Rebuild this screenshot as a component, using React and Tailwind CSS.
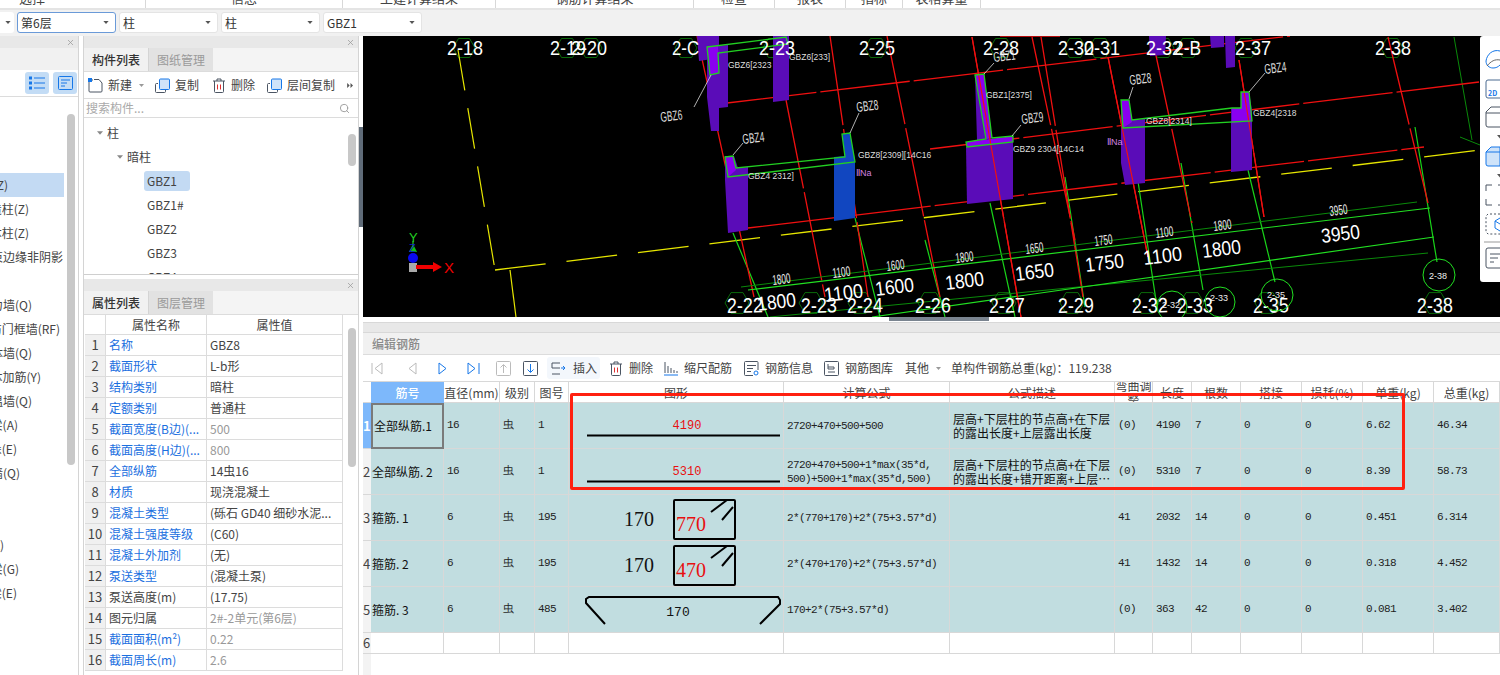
import { X, Search } from 'lucide-react';

const cjk = "font-['Noto_Sans_CJK_SC',sans-serif]";
const mono = "font-['Liberation_Mono',monospace] text-[11px] tracking-[-0.6px]";

function Caret({ className = 'w-[7px] h-[4px]', color = '#666' }) {
    return (
        <svg viewBox="0 0 7 4" className={className}>
            <path d="M0 0h7L3.5 4z" fill={color} />
        </svg>
    );
}

function Dropdown({ label, className }) {
    return (
        <div className={`flex h-[21px] items-center justify-between rounded-[3px] border bg-white pl-[3px] pr-[6px] text-[12px] text-[#333] ${className}`}>
            <span>{label}</span>
            <Caret className="w-[6px] h-[3px]" color="#555" />
        </div>
    );
}

function TitleBar() {
    return (
        <div className="flex h-[12px] items-center justify-end bg-[#e8e8e8] pr-[3px]">
            <X className="w-[9px] h-[9px] text-[#999]" strokeWidth={2} />
        </div>
    );
}

function Tabs({ first, second }) {
    return (
        <div className="flex h-[24px] border-b border-[#dcdcdc] bg-[#f4f4f4] text-[12px]">
            <div className="flex w-[65px] items-center justify-center border-r border-[#d4d4d4] bg-[#f1f1f1] font-medium text-[#333]">{first}</div>
            <div className="flex w-[64px] items-center justify-center bg-[#e2e2e2] text-[#9a9a9a]">{second}</div>
        </div>
    );
}

const leftRows = [
    { y: 'mt-[76px]', w: 'w-[8px]', t: '柱(Z)', active: true },
    { w: 'w-[29px]', t: '构造柱(Z)' },
    { w: 'w-[29px]', t: '砌体柱(Z)' },
    { w: 'w-[63px]', t: '约束边缘非阴影' },
    { y: 'mt-[24px]', w: 'w-[32px]', t: '剪力墙(Q)' },
    { w: 'w-[60px]', t: '人防门框墙(RF)' },
    { w: 'w-[32px]', t: '砌体墙(Q)' },
    { w: 'w-[41px]', t: '砌体加筋(Y)' },
    { w: 'w-[32px]', t: '保温墙(Q)' },
    { w: 'w-[18px]', t: '暗梁(A)' },
    { w: 'w-[17px]', t: '墙垛(E)' },
    { w: 'w-[20px]', t: '幕墙(Q)' },
    { y: 'mt-[48px]', w: 'w-[4px]', t: '梁(L)' },
    { w: 'w-[19px]', t: '圈梁(G)' },
    { w: 'w-[17px]', t: '连梁(E)' },
];

function LeftPanel() {
    return (
        <div className="relative w-[79px] shrink-0 overflow-hidden border-r border-[#d4d4d4]">
            <TitleBar />
            <div className="h-[22px] bg-[#f1f1f1]" />
            <div className="flex h-[27px] items-center justify-end gap-[4px] border-b border-[#dcdcdc] pr-[1px]">
                <div className="flex h-[22px] w-[24px] items-center justify-center rounded-[3px] bg-[#c3dcf5]">
                    <svg viewBox="0 0 16 14" className="w-[16px] h-[14px]" fill="none" stroke="#1677e8">
                        <path d="M5 2h11M5 7h11M5 12h11" />
                        <rect x="0.5" y="1" width="2" height="2" /><rect x="0.5" y="6" width="2" height="2" /><rect x="0.5" y="11" width="2" height="2" />
                    </svg>
                </div>
                <div className="flex h-[22px] w-[24px] items-center justify-center rounded-[3px] bg-[#c3dcf5]">
                    <svg viewBox="0 0 15 14" className="w-[15px] h-[14px]" fill="none" stroke="#1677e8">
                        <rect x="0.5" y="0.5" width="14" height="13" rx="1" />
                        <path d="M3 4h9M3 7h6M3 10h4" />
                    </svg>
                </div>
            </div>
            <div className="text-[12px] text-[#444]">
                {leftRows.map((r) => (
                    <div key={r.t} className={`flex h-[24px] w-[64px] items-center overflow-hidden ${r.y || ''} ${r.active ? 'bg-[#c3daf3]' : ''}`}>
                        <div className={`flex shrink-0 justify-end whitespace-nowrap ${r.w}`}>{r.t}</div>
                    </div>
                ))}
            </div>
            <div className="absolute left-[67px] top-[78px] h-[351px] w-[8px] rounded-full bg-[#c8c8c8]" />
        </div>
    );
}

function ToolIcon({ children, className = 'w-[15px] h-[15px]', vb = '0 0 15 15' }) {
    return (
        <svg viewBox={vb} className={`shrink-0 ${className}`} fill="none" stroke="#4b5563">
            {children}
        </svg>
    );
}

const copyPath = (
    <>
        <path d="M3 5.5H1.5a1 1 0 0 0-1 1v7a1 1 0 0 0 1 1h8a1 1 0 0 0 1-1V12" />
        <rect x="4.5" y="1" width="10" height="10.5" rx="1" fill="#cfe3f9" stroke="#1677e8" />
    </>
);

const trashPath = (
    <>
        <path d="M1 3h12M5 3V1h4v2M2.5 3v10.5a1 1 0 0 0 1 1h7a1 1 0 0 0 1-1V3" />
        <path d="M5.5 6.5v5M8.5 6.5v5" stroke="#e03030" />
    </>
);

function ComponentToolbar() {
    return (
        <div className="flex h-[27px] items-center border-b border-[#dcdcdc] pl-[4px] text-[12px] text-[#444]">
            <ToolIcon>
                <path d="M5 2H2a1.5 1.5 0 0 0-1 1v10a1 1 0 0 0 1 1h11a1 1 0 0 0 1-1V5l-3-3.500H6" />
                <path d="M0 0h4v4H0z" fill="#1677e8" stroke="none" />
            </ToolIcon>
            <span className="ml-[5px]">新建</span>
            <Caret className="ml-[7px] w-[5px] h-[3px]" color="#999" />
            <ToolIcon className="ml-[11px] w-[15px] h-[15px]">{copyPath}</ToolIcon>
            <span className="ml-[5px]">复制</span>
            <ToolIcon className="ml-[13px] w-[14px] h-[15px]" vb="0 0 14 15">{trashPath}</ToolIcon>
            <span className="ml-[5px]">删除</span>
            <ToolIcon className="ml-[12px] w-[15px] h-[15px]">{copyPath}</ToolIcon>
            <span className="ml-[5px]">层间复制</span>
            <div className="ml-[11px] flex h-[16px] w-[9px] items-center justify-center rounded-[2px] bg-white">
                <svg viewBox="0 0 8 6" className="w-[7px] h-[5px]"><path d="M0 0l3 3-3 3zM4 0l3 3-3 3z" fill="#555" /></svg>
            </div>
        </div>
    );
}

function ComponentList() {
    return (
        <div className="relative h-[239px] border-b border-[#cfcfcf]">
            <TitleBar />
            <Tabs first="构件列表" second="图纸管理" />
            <ComponentToolbar />
            <div className="flex h-[19px] items-center justify-between border-b border-[#dcdcdc] pl-[2px] pr-[8px] text-[12px] text-[#aaa]">
                <span>搜索构件...</span>
                <Search className="w-[11px] h-[11px] text-[#999]" />
            </div>
            <div className="h-[156px] overflow-hidden pt-[3px] text-[12px] text-[#444]">
                <div className="flex h-[24px] items-center pl-[13px]">
                    <Caret className="w-[6px] h-[4px]" color="#888" /><span className="ml-[4px]">柱</span>
                </div>
                <div className="flex h-[24px] items-center pl-[33px]">
                    <Caret className="w-[6px] h-[4px]" color="#888" /><span className="ml-[4px]">暗柱</span>
                </div>
                {['GBZ1', 'GBZ1#', 'GBZ2', 'GBZ3', 'GBZ4'].map((g, i) => (
                    <div key={g} className="flex h-[24px] items-center pl-[60px]">
                        <span className={`rounded-[3px] px-[3px] py-[1px] ${i === 0 ? 'w-[46px] bg-[#c3daf3]' : ''}`}>{g}</span>
                    </div>
                ))}
            </div>
            <div className="absolute left-[264px] top-[98px] h-[32px] w-[8px] rounded-full bg-[#c8c8c8]" />
        </div>
    );
}

const props = [
    ['名称', 'GBZ8', 1],
    ['截面形状', 'L-b形', 1],
    ['结构类别', '暗柱', 1],
    ['定额类别', '普通柱', 1],
    ['截面宽度(B边)(...', '500', 1, 1],
    ['截面高度(H边)(...', '800', 1, 1],
    ['全部纵筋', '14虫16', 1],
    ['材质', '现浇混凝土', 1],
    ['混凝土类型', '(砾石 GD40 细砂水泥...', 1],
    ['混凝土强度等级', '(C60)', 1],
    ['混凝土外加剂', '(无)', 1],
    ['泵送类型', '(混凝土泵)', 1],
    ['泵送高度(m)', '(17.75)', 0],
    ['图元归属', '2#-2单元(第6层)', 0, 1],
    ['截面面积(m²)', '0.22', 1, 1],
    ['截面周长(m)', '2.6', 1, 1],
];

function PropertyList() {
    return (
        <div className="relative mt-[4px] flex-1 overflow-hidden">
            <TitleBar />
            <Tabs first="属性列表" second="图层管理" />
            <div className="ml-px grid w-[258px] grid-cols-[21px_101px_136px] text-[12px]">
                <div className="h-[20px] border-b border-r border-[#dcdcdc]" />
                <div className="flex h-[20px] items-center justify-center border-b border-r border-[#dcdcdc] text-[#444]">属性名称</div>
                <div className="flex h-[20px] items-center justify-center border-b border-r border-[#dcdcdc] text-[#444]">属性值</div>
                {props.map(([name, val, blue, gray], i) => (
                    <div key={name} className="contents">
                        <div className="flex h-[21px] items-center justify-center border-b border-r border-[#dcdcdc] bg-[#f0f0f0] text-[13px] text-[#444]">{i + 1}</div>
                        <div className={`flex h-[21px] items-center overflow-hidden whitespace-nowrap border-b border-r border-[#dcdcdc] pl-[3px] ${blue ? 'text-[#1a6fe0]' : 'text-[#444]'}`}>{name}</div>
                        <div className={`flex h-[21px] items-center overflow-hidden whitespace-nowrap border-b border-r border-[#dcdcdc] pl-[3px] ${gray ? 'text-[#999]' : 'text-[#444]'}`}>{val}</div>
                    </div>
                ))}
            </div>
            <div className="ml-[6px] mt-[4px] h-[6px] w-[79px] rounded-t-[4px] border border-[#ccc]" />
            <div className="absolute left-[264px] top-[49px] h-[139px] w-[8px] rounded-full bg-[#c8c8c8]" />
        </div>
    );
}

// 3D model view, coordinates are page coordinates
const pts = (a) => a.map((p) => p.join(',')).join(' ');

const purple = [
    [[697, 36], [719, 36], [719, 58], [699, 61]],
    [[707, 47], [728, 45], [728, 107], [719, 108], [719, 131], [711, 131], [707, 97]],
    [[773, 36], [789, 36], [789, 100], [773, 102]],
    [[725, 156], [734, 156], [738, 168], [748, 167], [748, 230], [728, 233], [725, 180]],
    [[975, 75], [984, 74], [992, 138], [985, 140], [977, 140]],
    [[966, 147], [1013, 142], [1013, 199], [967, 204]],
    [[1121, 100], [1129, 100], [1132, 120], [1145, 119], [1145, 183], [1125, 185], [1121, 163]],
    [[1231, 108], [1241, 108], [1241, 92], [1249, 92], [1252, 110], [1252, 170], [1231, 172]],
    [[1149, 36], [1166, 36], [1165, 55], [1150, 56]],
    [[1210, 36], [1224, 36], [1224, 47], [1211, 48]],
    [[1225, 36], [1235, 36], [1235, 67], [1226, 68]],
];

// brighter top faces of the L-shaped columns
const stems = [
    [[707, 47], [718, 46], [719, 73], [710, 75]],
    [[725, 157], [733, 156], [736, 170], [728, 177]],
    [[975, 75], [984, 74], [992, 138], [986, 139]],
    [[1121, 100], [1129, 100], [1132, 122], [1123, 128]],
    [[1241, 92], [1249, 92], [1252, 121], [1232, 123], [1232, 108], [1241, 108]],
];

const outlines = [
    [[707, 47], [786, 37], [788, 44], [718, 53], [719, 73], [710, 75]],
    [[725, 157], [733, 156], [736, 168], [845, 157], [842, 134], [850, 133], [855, 162], [728, 177]],
    [[975, 75], [984, 74], [992, 138], [1013, 136], [1013, 142], [967, 147], [966, 142], [986, 139]],
    [[1121, 100], [1129, 100], [1132, 120], [1232, 108], [1241, 108], [1241, 92], [1249, 92], [1252, 121], [1123, 128]],
];

const redLines = [
    [697, 36, 754, 297], [786, 100, 825, 297], [830, 36, 868, 297], [887, 36, 940, 297],
    [972, 37, 1021, 317], [1032, 37, 1075, 240], [1041, 37, 1083, 297], [1108, 57, 1148, 257],
    [1152, 37, 1192, 223], [1239, 60, 1264, 217], [1388, 37, 1428, 203],
    [727, 103, 1290, 36], [930, 149, 1479, 82], [748, 228, 1424, 147],
    [1000, 36, 1060, 36],
];

const greenLines = [
    [990, 203, 1015, 317], [1065, 177, 1085, 307], [1134, 155, 1157, 307], [1181, 163, 1203, 290],
    [1248, 170, 1275, 282], [1415, 127, 1437, 262], [733, 233, 768, 317], [855, 218, 880, 317], [925, 240, 945, 317],
];

const dimDark = [[741, 287, 1417, 202], [770, 317, 1428, 253]];
const dimBright = [[748, 290, 1430, 208], [872, 317, 1434, 237]];
const darkGreen = [[1454, 37, 1472, 140], [1460, 137, 1480, 145]];

const hexes = [464, 567, 591, 686, 774, 876, 1001, 1075, 1100, 1163, 1188, 1246, 1392];
const hexesLow = [737, 811, 860, 930, 1004, 1072, 1147, 1192, 1267, 1435];

const topLabels = [[447, '2-18'], [550, '2-19'], [571, '2-20'], [672, '2-C'], [759, '2-23'], [859, '2-25'], [983, '2-28'], [1058, '2-30'], [1084, '2-31'], [1146, '2-32'], [1174, '2-B'], [1235, '2-37'], [1375, '2-38']];
const lowLabels = [[727, '2-22'], [801, '2-23'], [847, '2-24'], [915, '2-26'], [989, '2-27'], [1058, '2-29'], [1132, '2-32'], [1177, '2-33'], [1253, '2-35'], [1417, '2-38']];

const bigDims = [[758, 311, '1800'], [825, 302, '1100'], [876, 296, '1600'], [946, 290, '1800'], [1016, 281, '1650'], [1086, 272, '1750'], [1144, 265, '1100'], [1203, 258, '1800'], [1322, 243, '3950']];
const smallDims = [[773, 285, '1800'], [833, 278, '1100'], [887, 271, '1600'], [956, 263, '1800'], [1026, 254, '1650'], [1095, 246, '1750'], [1156, 238, '1100'], [1214, 231, '1800'], [1330, 216, '3950']];

const tags = [[661, 122, 'GBZ6'], [743, 144, 'GBZ4'], [857, 112, 'GBZ8'], [994, 62, 'GBZ1'], [1022, 124, 'GBZ9'], [1130, 85, 'GBZ8'], [1265, 74, 'GBZ4']];
const notes = [[728, 68, 'GBZ6[2323'], [789, 60, 'GBZ6[233]'], [748, 179, 'GBZ4 2312]'], [858, 158, 'GBZ8[2309][14C16'], [986, 98, 'GBZ1[2375]'], [1013, 152, 'GBZ9 2304[14C14'], [1146, 124, 'GBZ8[2314]'], [1253, 116, 'GBZ4[2318']];
const leaders = [[694, 107, 711, 75], [733, 155, 743, 143], [850, 133, 859, 113], [984, 74, 994, 63], [1012, 136, 1021, 125], [1129, 99, 1133, 87], [1249, 92, 1265, 73]];

function hexPoints(cx, cy, r) {
    return Array.from({ length: 6 }, (_, i) => {
        const a = (Math.PI / 3) * i;
        return `${cx + r * Math.cos(a)},${cy + r * Math.sin(a)}`;
    }).join(' ');
}

function ModelView() {
    return (
        <svg viewBox="363 36 1137 281" className="block h-[281px] w-[1137px] bg-black font-['Liberation_Sans',sans-serif]">
            {hexes.map((x) => <polygon key={x} points={hexPoints(x, 48, 11)} fill="none" stroke="#0a6a0a" />)}
            {hexesLow.map((x) => <polygon key={x} points={hexPoints(x, 303, 12)} fill="none" stroke="#0a6a0a" />)}
            <path d="M458 50L495 270" stroke="#e6e600" strokeWidth="1.2" strokeDasharray="41 18" />
            <path d="M495 270L1480 150" stroke="#e6e600" strokeWidth="1.3" strokeDasharray="51 21" />
            <path d="M510 270L516 317" stroke="#e6e600" strokeWidth="1.2" />
            {greenLines.map((l) => <line key={l.join()} x1={l[0]} y1={l[1]} x2={l[2]} y2={l[3]} stroke="#19d419" strokeWidth="1.2" />)}
            {darkGreen.map((l) => <line key={l.join()} x1={l[0]} y1={l[1]} x2={l[2]} y2={l[3]} stroke="#0a8a0a" />)}
            {redLines.map((l) => <line key={l.join()} x1={l[0]} y1={l[1]} x2={l[2]} y2={l[3]} stroke="#f01010" strokeWidth="1.3" strokeDasharray="90 4" />)}
            {dimDark.map((l) => <line key={l.join()} x1={l[0]} y1={l[1]} x2={l[2]} y2={l[3]} stroke="#0a8a0a" />)}
            {dimBright.map((l) => <line key={l.join()} x1={l[0]} y1={l[1]} x2={l[2]} y2={l[3]} stroke="#22e022" strokeWidth="1.2" />)}
            {purple.map((p) => <polygon key={p.join()} points={pts(p)} fill="#5a0cb8" />)}
            <polygon points="966,142 1013,136 1013,142 967,147" fill="#8a00f0" />
            <polygon points={pts([[842, 134], [850, 133], [855, 160], [855, 218], [834, 221], [834, 157], [845, 156]])} fill="#1146c0" />
            {stems.map((p) => <polygon key={p.join()} points={pts(p)} fill="#8a00f0" />)}
            <line x1="972" y1="37" x2="1021" y2="317" stroke="#f01010" strokeWidth="1.2" />
            <line x1="1108" y1="57" x2="1148" y2="257" stroke="#f01010" strokeWidth="1.2" />
            <line x1="1239" y1="60" x2="1264" y2="217" stroke="#f01010" strokeWidth="1.2" />
            {outlines.map((p) => <polygon key={p.join()} points={pts(p)} fill="none" stroke="#22d022" strokeWidth="1.3" />)}
            {leaders.map((l) => <line key={l.join()} x1={l[0]} y1={l[1]} x2={l[2]} y2={l[3]} stroke="#ddd" strokeWidth="0.8" />)}
            {topLabels.map(([x, t]) => <text key={x} x={x} y="55" fontSize="21" textLength={t.length * 9} lengthAdjust="spacingAndGlyphs" fill="#fff">{t}</text>)}
            {lowLabels.map(([x, t]) => <text key={x} x={x} y="313" fontSize="21" textLength={t.length * 9} lengthAdjust="spacingAndGlyphs" fill="#fff" transform={`rotate(-1 ${x} 313)`}>{t}</text>)}
            {bigDims.map(([x, y, t]) => <text key={x} x={x} y={y} fontSize="20" textLength="39" lengthAdjust="spacingAndGlyphs" fill="#fff" transform={`rotate(-7 ${x} ${y})`}>{t}</text>)}
            {smallDims.map(([x, y, t]) => <text key={x} x={x} y={y} fontSize="14" textLength="18" lengthAdjust="spacingAndGlyphs" fill="#eee" transform={`rotate(-7 ${x} ${y})`}>{t}</text>)}
            {tags.map(([x, y, t]) => <text key={t + x} x={x} y={y} fontSize="14" textLength="22" lengthAdjust="spacingAndGlyphs" fill="#ddd" transform={`rotate(-7 ${x} ${y})`}>{t}</text>)}
            {notes.map(([x, y, t]) => <text key={t} x={x} y={y} fontSize="8.5" fill="#ddd">{t}</text>)}
            <text x="856" y="176" fontSize="9" fill="#d080e0">ⅡNa</text>
            <text x="1107" y="145" fontSize="9" fill="#d080e0">ⅡNa</text>
            <circle cx="1220" cy="302" r="15" fill="none" stroke="#22e022" />
            <circle cx="1277" cy="295" r="16" fill="none" stroke="#22e022" />
            <circle cx="1439" cy="275" r="16" fill="none" stroke="#22e022" />
            <circle cx="1172" cy="306" r="15" fill="none" stroke="#22e022" />
            <text x="1429" y="279" fontSize="9" fill="#eee">2-38</text>
            <text x="1267" y="298" fontSize="9" fill="#eee">2-35</text>
            <text x="1210" y="301" fontSize="9" fill="#eee">2-33</text>
            <text x="1162" y="308" fontSize="9" fill="#eee">2-32</text>
            {/* axis gizmo */}
            <path d="M413 241v4" stroke="#22d022" strokeWidth="1.2" />
            <path d="M413 244l4 8h-8z" fill="#10c010" />
            <text x="409" y="252" fontSize="11" fill="#1020c0">Z</text>
            <circle cx="413" cy="258" r="5" fill="#0a0af0" />
            <rect x="409" y="263" width="8" height="9" fill="#aaa" />
            <path d="M416 265h17v-3l9 5-9 5v-3h-17z" fill="#f00000" />
            <text x="409" y="242" fontSize="13" fill="#22d022">Y</text>
            <text x="444" y="273" fontSize="15" fill="#f00000">X</text>
        </svg>
    );
}

function Palette() {
    return (
        <div className="absolute right-0 top-0 h-[246px] w-[20px] rounded-l-[3px] bg-white">
            <svg viewBox="1480 36 20 246" className="h-[246px] w-[20px]" fill="none" stroke="#4b5563">
                <path d="M1500 51c-7-2-13 3-14 10 0 4 3 7 7 7 3 0 5-1 7-3" stroke="#1677e8" />
                <path d="M1487 66c4-5 8-7 13-6" stroke="#666" />
                <path d="M1500 80h-12a2 2 0 0 0-2 2v14a2 2 0 0 0 2 2h12" stroke="#4b6a90" />
                <text x="1488" y="96" fontSize="7" fill="#1677e8" stroke="none" fontWeight="700">2D</text>
                <path d="M1500 107h-9l-5 5v13a2 2 0 0 0 2 2h12M1486 113h14" />
                <path d="M1497 135h7l-3.500 4z" fill="#555" stroke="none" />
                <path d="M1500 147h-9l-5 5v12a2 2 0 0 0 2 2h12z" fill="#cfe3f9" stroke="#1677e8" />
                <path d="M1486 152h14" stroke="#1677e8" />
                <path d="M1497 174h7l-3.500 4z" fill="#555" stroke="none" />
                <path d="M1492 185h-6v6M1486 199v6h6M1498 185h2M1498 205h2" />
                <path d="M1500 214h-12l-2 2v16l2 2h12" strokeDasharray="2 2" />
                <path d="M1500 218l-5 3v7l5 3M1495 221l5 3" stroke="#1677e8" />
                <path d="M1484 242h16" stroke="#999" />
                <path d="M1500 248h-12a2 2 0 0 0-2 2v16a2 2 0 0 0 2 2h12M1490 254h10M1490 258h8M1490 262h4" />
            </svg>
        </div>
    );
}

const columns = 'grid-cols-[8px_73px_56px_35px_34px_215px_166px_165px_38px_39px_49px_61px_61px_71px_66px]';
const cell = 'border-b border-r border-[#d8d8d8]';

const headers = ['直径(mm)', '级别', '图号', '图形', '计算公式', '公式描述', '弯曲调整', '长度', '根数', '搭接', '损耗(%)', '单重(kg)', '总重(kg)'];

function StraightBar({ value }) {
    return (
        <svg viewBox="0 0 214 45" className="h-[45px] w-[214px]">
            <text x="118" y="26" textAnchor="middle" fontSize="12" fill="#e81010" className="font-['Liberation_Mono',monospace]">{value}</text>
            <path d="M18 32.500h193" stroke="#000" strokeWidth="2" />
        </svg>
    );
}

function Stirrup({ value }) {
    return (
        <svg viewBox="0 0 214 45" className="h-[45px] w-[214px]">
            <text x="70" y="31" textAnchor="middle" fontSize="20" fill="#111" className="font-['Liberation_Serif',serif]">170</text>
            <rect x="105" y="5" width="61" height="39" rx="1" fill="none" stroke="#000" strokeWidth="2" />
            <path d="M142 17L158 5M153 25L164 12" stroke="#000" strokeWidth="2" fill="none" />
            <text x="107" y="36" fontSize="20" fill="#e81010" className="font-['Liberation_Serif',serif]">{value}</text>
        </svg>
    );
}

function Hook() {
    return (
        <svg viewBox="0 0 214 45" className="h-[45px] w-[214px]">
            <path d="M36 37L17 16V12l3-2h189l2 3v4L191 37" stroke="#000" strokeWidth="2" fill="none" />
            <text x="109" y="29" textAnchor="middle" fontSize="13" fill="#111" className="font-['Liberation_Mono',monospace]">170</text>
        </svg>
    );
}

const rows = [
    { name: '全部纵筋.1', d: '16', no: '1', shape: <StraightBar value="4190" />, f: ['2720+470+500+500'], desc: ['层高+下层柱的节点高+在下层', '的露出长度+上层露出长度'], adj: '(0)', len: '4190', n: '7', unit: '6.62', total: '46.34' },
    { name: '全部纵筋. 2', d: '16', no: '1', shape: <StraightBar value="5310" />, f: ['2720+470+500+1*max(35*d,', '500)+500+1*max(35*d,500)'], desc: ['层高+下层柱的节点高+在下层', '的露出长度+错开距离+上层…'], adj: '(0)', len: '5310', n: '7', unit: '8.39', total: '58.73' },
    { name: '箍筋. 1', d: '6', no: '195', shape: <Stirrup value="770" />, f: ['2*(770+170)+2*(75+3.57*d)'], desc: [], adj: '41', len: '2032', n: '14', unit: '0.451', total: '6.314' },
    { name: '箍筋. 2', d: '6', no: '195', shape: <Stirrup value="470" />, f: ['2*(470+170)+2*(75+3.57*d)'], desc: [], adj: '41', len: '1432', n: '14', unit: '0.318', total: '4.452' },
    { name: '箍筋. 3', d: '6', no: '485', shape: <Hook />, f: ['170+2*(75+3.57*d)'], desc: [], adj: '(0)', len: '363', n: '42', unit: '0.081', total: '3.402' },
];

function RebarTable() {
    const numCell = `${cell} flex items-center overflow-hidden whitespace-nowrap bg-[#c1dde0] pl-[3px] text-[#222] ${mono}`;
    return (
        <div className="relative flex-1 overflow-hidden">
            <div className={`grid ${columns} text-[12px] text-[#444]`}>
                <div className="h-[21px] border-b border-[#d8d8d8]" />
                <div className="flex h-[21px] items-center justify-center bg-[#7db8fb] font-medium text-white">筋号</div>
                {headers.map((h) => (
                    <div key={h} className={`${cell} flex h-[21px] items-center justify-center overflow-hidden text-center leading-[13px]`}>{h}</div>
                ))}
                {rows.map((r, i) => (
                    <div key={r.name} className="contents">
                        <div className={`flex h-[46px] items-center justify-start border-b border-[#d8d8d8] text-[13px] ${i === 0 ? 'bg-[#7db8fb] font-bold text-white' : 'bg-[#f3f3f3] text-[#444]'}`}>{i + 1}</div>
                        <div className={`flex h-[46px] items-center overflow-hidden whitespace-nowrap bg-[#c1dde0] pl-[1px] text-[#111] ${i === 0 ? 'border-2 border-[#7a7a7a]' : cell}`}>{r.name}</div>
                        <div className={numCell}>{r.d}</div>
                        <div className={numCell}>虫</div>
                        <div className={numCell}>{r.no}</div>
                        <div className={`${cell} overflow-hidden bg-[#c1dde0]`}>{r.shape}</div>
                        <div className={`${numCell} flex-col !items-start justify-center leading-[14px]`}>
                            {r.f.map((t) => <span key={t}>{t}</span>)}
                        </div>
                        <div className={`${cell} flex flex-col justify-center overflow-hidden whitespace-nowrap bg-[#c1dde0] pl-[3px] leading-[14px] text-[#111]`}>
                            {r.desc.map((t) => <span key={t}>{t}</span>)}
                        </div>
                        <div className={numCell}>{r.adj}</div>
                        <div className={numCell}>{r.len}</div>
                        <div className={numCell}>{r.n}</div>
                        <div className={numCell}>0</div>
                        <div className={numCell}>0</div>
                        <div className={numCell}>{r.unit}</div>
                        <div className={numCell}>{r.total}</div>
                    </div>
                ))}
                <div className="h-[21px] border-b border-[#d8d8d8] bg-[#f3f3f3] text-[13px]">6</div>
                {Array.from({ length: 14 }, (_, i) => <div key={i} className={`${cell} h-[21px]`} />)}
            </div>
            <div className="h-[21px] w-[8px] bg-[#f3f3f3]" />
            {/* red mark-up drawn over the table */}
            <div className="absolute left-[207px] top-[11px] h-[97px] w-[835px] rounded-[2px] border-[3px] border-[#ff2010]" />
        </div>
    );
}

function NavIcon({ d, color = '#bbb', box }) {
    return (
        <svg viewBox="0 0 15 15" className="h-[15px] w-[15px] shrink-0" fill="none" stroke={color}>
            {box && <rect x="0.500" y="0.500" width="14" height="14" rx="1" />}
            <path d={d} />
        </svg>
    );
}

function RebarToolbar() {
    return (
        <div className="flex h-[27px] items-center border-b border-[#d8d8d8] text-[12px] text-[#444]">
            <div className="ml-[8px]"><NavIcon d="M1 2v11M11 2L4 7.500l7 5.500z" /></div>
            <div className="ml-[19px]"><NavIcon d="M11 2L4 7.500l7 5.500z" /></div>
            <div className="ml-[15px]"><NavIcon color="#1677e8" d="M4 2l7 5.500L4 13z" /></div>
            <div className="ml-[16px]"><NavIcon color="#1677e8" d="M2 2l7 5.500L2 13zM13 2v11" /></div>
            <div className="ml-[15px]"><NavIcon box d="M7.500 12V4M4.500 6.500l3-3 3 3" /></div>
            <div className="ml-[12px]">
                <svg viewBox="0 0 15 15" className="h-[15px] w-[15px]" fill="none">
                    <rect x="0.500" y="0.500" width="14" height="14" rx="1" stroke="#4b5563" />
                    <path d="M7.500 3v8M4.500 8.500l3 3 3-3" stroke="#1677e8" />
                </svg>
            </div>
            <div className="ml-[9px] flex h-[22px] w-[53px] items-center rounded-[3px] bg-[#f3f7fc] pl-[4px]">
                <svg viewBox="0 0 15 13" className="h-[13px] w-[15px]" fill="none" stroke="#4b5563">
                    <path d="M9 1H1v5h8M1 12h8" />
                    <path d="M10 6h4M12 4l2 2-2 2" stroke="#1677e8" />
                </svg>
                <span className="ml-[7px]">插入</span>
            </div>
            <ToolIcon className="ml-[9px] h-[15px] w-[14px]" vb="0 0 14 15">{trashPath}</ToolIcon>
            <span className="ml-[6px]">删除</span>
            <svg viewBox="0 0 14 15" className="ml-[11px] h-[15px] w-[14px]" fill="none">
                <path d="M1 1v11M4 5v7M7 7v5M10 9v3M13 10v2" stroke="#4b5563" />
                <path d="M0 14h14" stroke="#1677e8" />
            </svg>
            <span className="ml-[6px]">缩尺配筋</span>
            <ToolIcon className="ml-[12px] h-[15px] w-[15px]">
                <path d="M14 9V1.500a1 1 0 0 0-1-1H1.500a1 1 0 0 0-1 1v12a1 1 0 0 0 1 1H9" />
                <path d="M3 4.500h9M3 7.500h6M3 10.500h4" />
                <circle cx="12" cy="12" r="2" stroke="#1677e8" />
            </ToolIcon>
            <span className="ml-[6px]">钢筋信息</span>
            <ToolIcon className="ml-[11px] h-[15px] w-[15px]">
                <rect x="0.500" y="0.500" width="14" height="14" rx="1" />
                <path d="M4 3v5h6V6H4M4 11h7" stroke="#4b5563" />
            </ToolIcon>
            <span className="ml-[6px]">钢筋图库</span>
            <span className="ml-[12px]">其他</span>
            <Caret className="ml-[7px] h-[3px] w-[5px]" color="#999" />
            <span className="ml-[10px]">单构件钢筋总重(kg)：119.238</span>
        </div>
    );
}

const topTabs = [
    ['w-[146px] pl-[19px]', '选择'],
    ['w-[197px] justify-center', '信息'],
    ['w-[153px] justify-center', '土建计算结果'],
    ['w-[198px] justify-center', '钢筋计算结果'],
    ['w-[81px] justify-center', '检查'],
    ['w-[71px] justify-center', '报表'],
    ['w-[57px] justify-center', '指标'],
    ['w-[78px] justify-center', '表格算量'],
];

export default function App() {
    return (
        <div className={`flex h-[675px] w-[1500px] flex-col overflow-hidden bg-white ${cjk}`}>
            <div className="flex h-[10px] shrink-0 overflow-hidden border-b-2 border-[#e4e4e4] bg-white text-[13px] text-[#444]">
                {topTabs.map(([c, t]) => (
                    <div key={t} className={`flex h-[8px] items-end border-r border-[#d8d8d8] ${c}`}>
                        <span className="mb-[3px] leading-[14px] whitespace-nowrap">{t}</span>
                    </div>
                ))}
            </div>
            <div className="flex h-[26px] shrink-0 items-center gap-[3px] bg-[#f1f1f1] pb-[1px]">
                <div className="flex h-[21px] w-[14px] items-center justify-end rounded-r-[3px] bg-white pr-[3px]">
                    <Caret className="w-[6px] h-[3px]" color="#555" />
                </div>
                <Dropdown label="第6层" className="w-[99px] border-[#6a9ad8]" />
                <Dropdown label="柱" className="w-[99px] border-[#e4e4e4]" />
                <Dropdown label="柱" className="w-[99px] border-[#e4e4e4]" />
                <Dropdown label="GBZ1" className="w-[99px] border-[#e4e4e4]" />
            </div>
            <div className="flex min-h-0 flex-1">
                <LeftPanel />
                <div className="w-[4px] shrink-0" />
                <div className="flex w-[276px] shrink-0 flex-col border-x border-[#d4d4d4]">
                    <ComponentList />
                    <PropertyList />
                </div>
                <div className="flex w-[4px] shrink-0 items-start pt-[91px]">
                    <div className="h-[100px] w-[4px] bg-[#5f6b78]" />
                </div>
                <div className="flex min-w-0 flex-1 flex-col">
                    <div className="relative h-[281px] shrink-0">
                        <ModelView />
                        <Palette />
                    </div>
                    <div className="flex h-[5px] shrink-0 justify-center pl-[15px]">
                        <div className="h-[4px] w-[100px] bg-[#7a8490]" />
                    </div>
                    <div className="h-[11px] shrink-0 border-y border-[#d8d8d8] bg-[#e8e8e8]" />
                    <div className="flex h-[22px] shrink-0 items-center border-b border-[#dcdcdc] bg-[#f1f1f1] pl-[9px] text-[12px] font-medium text-[#8a8a8a]">编辑钢筋</div>
                    <RebarToolbar />
                    <RebarTable />
                </div>
            </div>
        </div>
    );
}
